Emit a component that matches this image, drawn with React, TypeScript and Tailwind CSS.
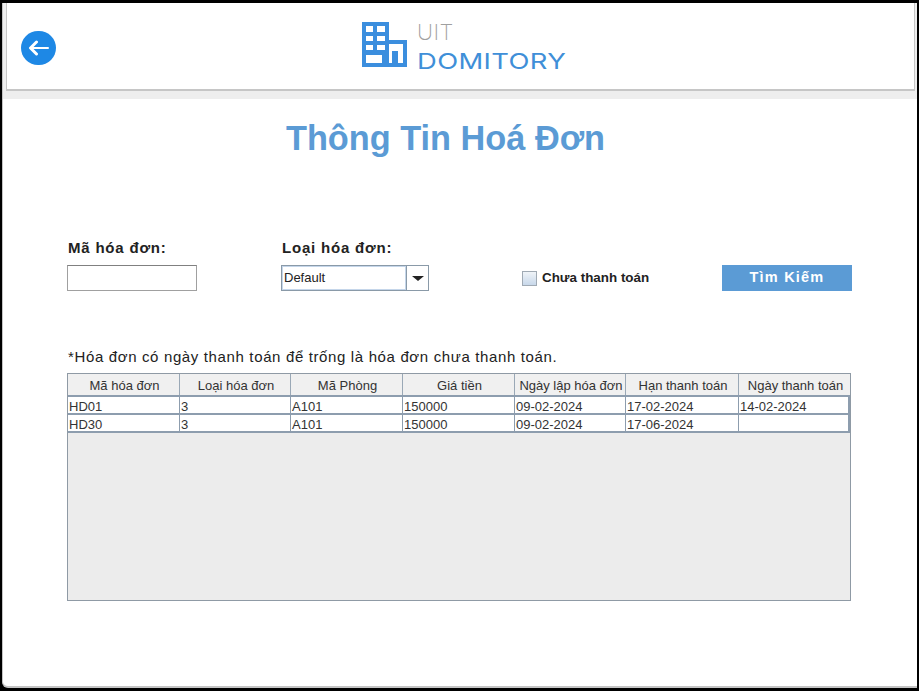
const sans = "font-['Liberation_Sans',Arial,sans-serif]";

const columns = [
  { name: "Mã hóa đơn", width: "w-[112px]" },
  { name: "Loại hóa đơn", width: "w-[111px]" },
  { name: "Mã Phòng", width: "w-[112px]" },
  { name: "Giá tiền", width: "w-[112px]" },
  { name: "Ngày lập hóa đơn", width: "w-[111px]" },
  { name: "Hạn thanh toán", width: "w-[113px]" },
  { name: "Ngày thanh toán", width: "w-[111px]" },
];

const rows = [
  ["HD01", "3", "A101", "150000", "09-02-2024", "17-02-2024", "14-02-2024"],
  ["HD30", "3", "A101", "150000", "09-02-2024", "17-06-2024", ""],
];

function Logo() {
  return (
    <div className="flex items-start gap-[10px]">
      <svg width="45" height="45" viewBox="0 0 45 45" className="shrink-0">
        <path
          fill="#3b8ede"
          fillRule="evenodd"
          d="M0 0H27V18H45V45H0ZM4 4V10H11V4ZM15 4V10H23V4ZM4 14V19H11V14ZM15 14V19H23V14ZM4 23V28H11V23ZM15 23V28H23V23ZM4 33V41H20V33ZM27 22V41H30V29H36V41H41V22Z"
        />
      </svg>
      <div className="flex flex-col font-['Inter',sans-serif] mt-[1px]">
        <span className="text-[22px] leading-[18px] font-extralight text-[#a0a0a0] tracking-[0.5px]">UIT</span>
        <span className="mt-[11px] text-[22px] leading-[18px] font-normal text-[#3f8fd8] tracking-[0.3px] inline-block origin-left scale-x-[1.245]">DOMITORY</span>
      </div>
    </div>
  );
}

export default function App() {
  return (
    <div className={`${sans} w-[919px] h-[691px] bg-black pt-[3px] pl-[2px] pr-[2px] pb-[3px] overflow-hidden`}>
      <div className="h-full flex flex-col bg-white rounded-bl-[6px] border-b-2 border-l border-[#c4c4c4]">
        <div className="bg-[#eeeeee] pb-[8px] pr-[2px] pl-[3px]">
          <header className="h-[88px] bg-white border-b-2 border-x border-[#c6c6c6] flex items-center relative justify-start pl-[355px]">
            <button className="absolute left-[14px] top-[28px] w-[35px] h-[34px] rounded-full bg-[#1e88e5] flex items-center justify-center">
              <svg width="22" height="16" viewBox="0 0 22 16" fill="none" stroke="white" strokeLinecap="round" strokeLinejoin="round">
                <path d="M8.5 2L2.5 8L8.5 14" strokeWidth="3" />
                <path d="M3 8H20" strokeWidth="2" />
              </svg>
            </button>
            <div className="mt-[-1px]">
              <Logo />
            </div>
          </header>
        </div>

        <h1 className="mt-[17px] text-center text-[34.3px] leading-[44px] font-bold text-[#5b9bd5] pr-[29px]">Thông Tin Hoá Đơn</h1>

        <div className="mt-[79px] pl-[64px] flex items-end">
          <div className="w-[214px]">
            <label className="block pl-[1px] text-[15px] leading-[17px] font-bold text-[#222222] tracking-[0.8px]">Mã hóa đơn:</label>
            <input className="mt-[9px] block w-[130px] h-[26px] bg-white border border-[#a0a0a0] border-t-[#808080]" />
          </div>
          <div className="w-[241px]">
            <label className="block pl-[1px] text-[15px] leading-[17px] font-bold text-[#222222] tracking-[0.8px]">Loại hóa đơn:</label>
            <div className="mt-[9px] w-[148px] h-[26px] flex border border-[#8a9aa8] bg-white">
              <div className="flex-1 flex items-center pl-[1px] text-[13px] text-[#222222] border border-[#c5d6ea]">Default</div>
              <div className="w-[22px] flex items-center justify-center border-l border-[#8a9aa8]">
                <div className="w-0 h-0 border-x-[6px] border-x-transparent border-t-[5px] border-t-[#222222]" />
              </div>
            </div>
          </div>
          <div className="w-[200px] h-[26px] flex items-center gap-[5px]">
            <div className="w-[15px] h-[15px] border border-[#a0aab4] bg-gradient-to-b from-[#f0f4f8] to-[#c8d8ea]" />
            <span className="text-[13.4px] font-bold text-[#222222]">Chưa thanh toán</span>
          </div>
          <button className="w-[130px] h-[26px] bg-[#5b9bd5] text-white text-[14.5px] font-bold tracking-[1.2px]">Tìm Kiếm</button>
        </div>

        <p className="mt-[57px] pl-[65px] text-[15px] leading-[18px] text-[#222222] tracking-[0.64px]">
          *Hóa đơn có ngày thanh toán để trống là hóa đơn chưa thanh toán.
        </p>

        <div className="mt-[7px] ml-[64px] w-[784px] h-[228px] bg-[#ececec] border border-[#8f9aa5]">
          <div className="flex h-[23px] bg-[#f0f0f0] border-b-2 border-[#8d9dae]">
            {columns.map((c) => (
              <div
                key={c.name}
                className={`${c.width} shrink-0 pt-[2px] pl-[2px] flex items-center justify-center whitespace-nowrap overflow-hidden text-[13px] text-[#333333] border-r border-[#9aa8b6] last:border-r-0`}
              >
                {c.name}
              </div>
            ))}
          </div>
          {rows.map((row) => (
            <div key={row[0]} className="flex h-[18px] bg-white border-b-2 border-[#8d9dae]">
              {row.map((cell, i) => (
                <div
                  key={i}
                  className={`${columns[i].width} shrink-0 pl-[1px] pt-[3px] flex items-center text-[13px] text-[#333333] border-r border-[#8d9dae] last:border-r-2`}
                >
                  {cell}
                </div>
              ))}
            </div>
          ))}
        </div>
      </div>
    </div>
  );
}
